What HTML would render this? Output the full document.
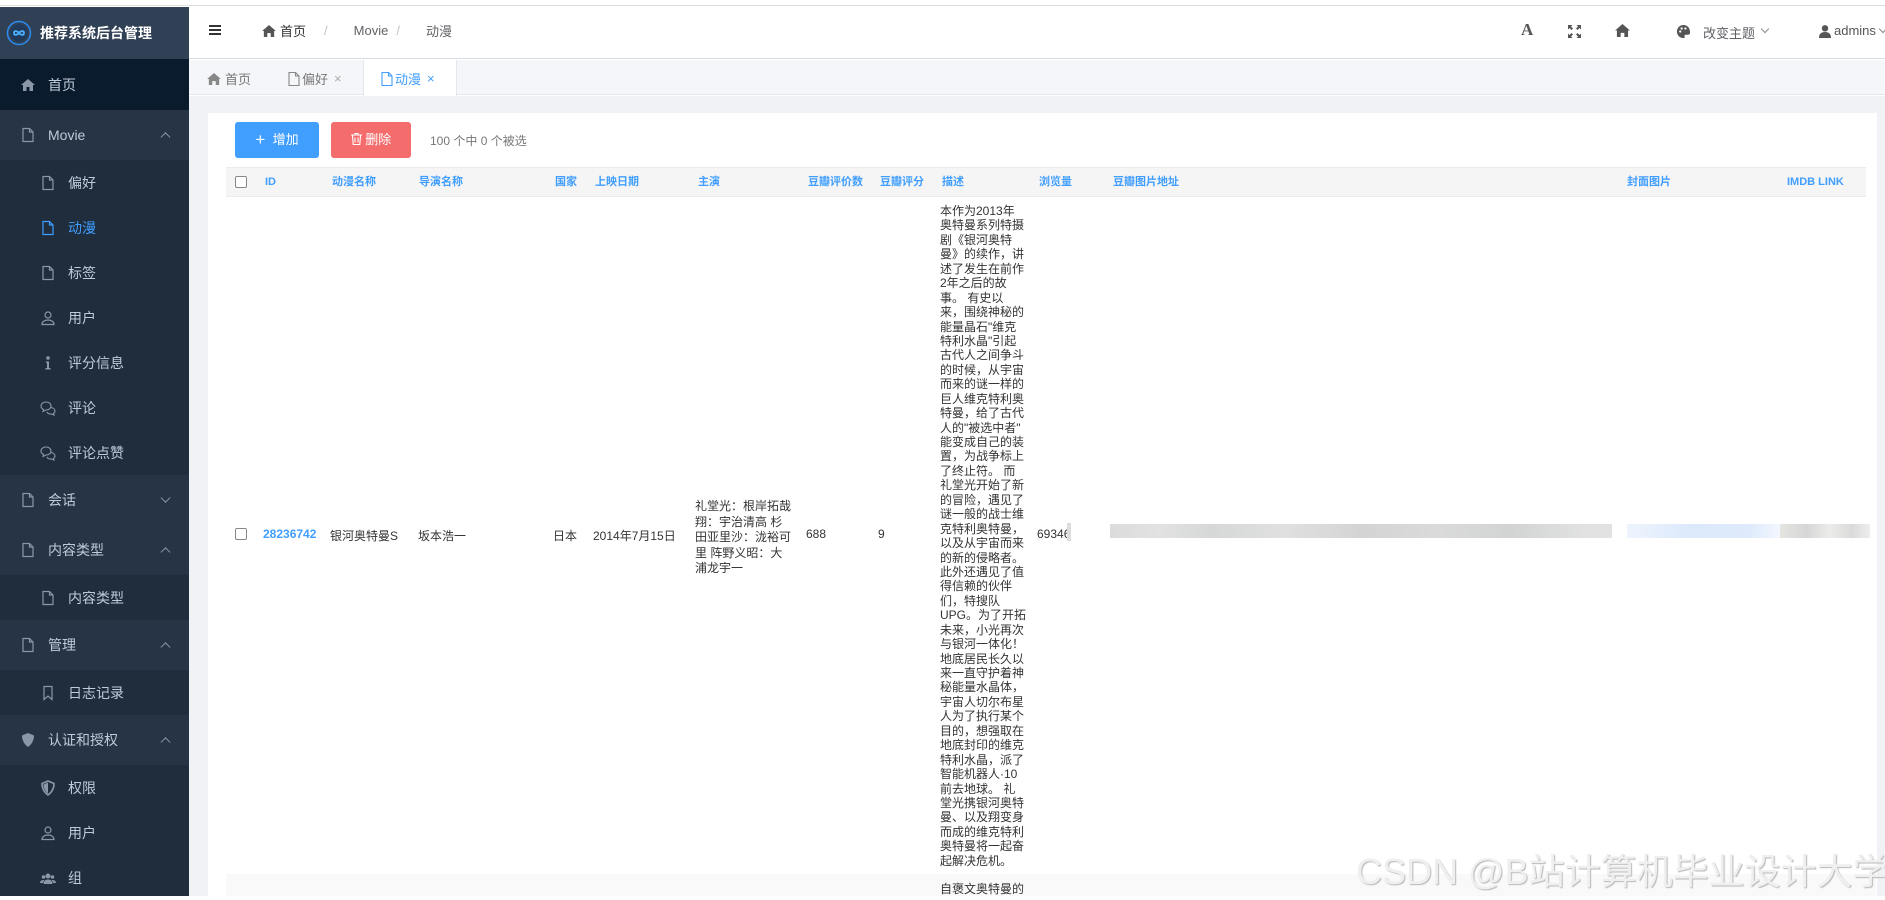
<!DOCTYPE html>
<html><head><meta charset="utf-8"><style>
*{margin:0;padding:0;box-sizing:border-box}
body{width:1885px;height:896px;overflow:hidden;font-family:"Liberation Sans","Noto Sans CJK SC",sans-serif;font-size:12px;color:#333;background:#fff;position:relative}
.a{position:absolute}
.side{left:0;top:7px;width:189px;height:889px;background:#1f2d3d}
.row{position:absolute;left:0;width:189px;color:#bfcbd9;font-size:14px;display:flex;align-items:center}
.row .ic{width:16px;height:16px;margin-right:12px;display:inline-block}
.sub{padding-left:40px;height:45px}
.top{padding-left:20px;height:50px;background:#263445}
.chev{position:absolute;right:20px;top:50%;width:7px;height:7px;border-left:1px solid #8a97a8;border-top:1px solid #8a97a8}
.up{transform:translateY(-20%) rotate(45deg)}
.dn{transform:translateY(-80%) rotate(225deg)}
.th{position:absolute;top:167px;height:30px;line-height:30px;color:#409eff;font-weight:bold;font-size:11px}
.td{position:absolute;font-size:12px;color:#333}
</style></head><body>
<div class="a" style="left:0;top:0;width:1885px;height:6px;background:#fff;border-bottom:1px solid #dcdcdc"></div>
<div class="a side"></div>
<div class="a" style="left:0;top:7px;width:189px;height:52px;background:#304156;display:flex;align-items:center">
 <svg style="margin-left:6px" width="26" height="26" viewBox="0 0 26 26"><circle cx="13" cy="13" r="11.5" fill="none" stroke="#2d8cf0" stroke-width="1.5"/><circle cx="13" cy="13" r="8.5" fill="#1f3a5a"/><path d="M13 13c-2-2.5-5-2.5-5 0s3 2.5 5 0 5-2.5 5 0-3 2.5-5 0" fill="none" stroke="#4fb0ff" stroke-width="1.8"/></svg>
 <span style="color:#fff;font-weight:bold;font-size:14px;margin-left:8px">推荐系统后台管理</span></div>
<div class="row top" style="top:59px;height:51px;background:#0b1b2e"><svg class="ic" viewBox="0 0 16 16"><path d="M1 8L8 2l7 6h-2v6H9.5v-4h-3v4H3V8z" fill="#8a97a8"/></svg>首页</div>
<div class="row top" style="top:110px"><svg class="ic" viewBox="0 0 16 16"><path d="M3 1.5h6.5L13 5v9.5H3z M9.5 1.5V5H13" fill="none" stroke="#8a97a8" stroke-width="1.2"/></svg>Movie<span class="chev up"></span></div>
<div class="row sub" style="top:160px"><svg class="ic" viewBox="0 0 16 16"><path d="M3 1.5h6.5L13 5v9.5H3z M9.5 1.5V5H13" fill="none" stroke="#8a97a8" stroke-width="1.2"/></svg>偏好</div>
<div class="row sub" style="top:205px;color:#409eff"><svg class="ic" viewBox="0 0 16 16"><path d="M3 1.5h6.5L13 5v9.5H3z M9.5 1.5V5H13" fill="none" stroke="#409eff" stroke-width="1.2"/></svg>动漫</div>
<div class="row sub" style="top:250px"><svg class="ic" viewBox="0 0 16 16"><path d="M3 1.5h6.5L13 5v9.5H3z M9.5 1.5V5H13" fill="none" stroke="#8a97a8" stroke-width="1.2"/></svg>标签</div>
<div class="row sub" style="top:295px"><svg class="ic" viewBox="0 0 16 16"><circle cx="8" cy="5" r="3" fill="none" stroke="#8a97a8" stroke-width="1.2"/><path d="M2 14.5c0-3 3-4.5 6-4.5s6 1.5 6 4.5z" fill="none" stroke="#8a97a8" stroke-width="1.2"/></svg>用户</div>
<div class="row sub" style="top:340px"><svg class="ic" viewBox="0 0 16 16"><circle cx="8" cy="3" r="1.8" fill="#8a97a8"/><path d="M6 6.5h3v6.5h1.5v1.5h-5V13H7V8H6z" fill="#8a97a8"/></svg>评分信息</div>
<div class="row sub" style="top:385px"><svg class="ic" viewBox="0 0 16 16"><path d="M1 6c0-2.5 2.5-4 5-4s5 1.5 5 4-2.5 4-5 4L3 11.5l.6-2C2 8.8 1 7.5 1 6zM11 7.5c2.5.3 4 1.8 4 3.5 0 1-.6 1.8-1.5 2.4l.5 1.6-2.5-1c-2 .3-4-.6-4.6-2" fill="none" stroke="#8a97a8" stroke-width="1.1"/></svg>评论</div>
<div class="row sub" style="top:430px"><svg class="ic" viewBox="0 0 16 16"><path d="M1 6c0-2.5 2.5-4 5-4s5 1.5 5 4-2.5 4-5 4L3 11.5l.6-2C2 8.8 1 7.5 1 6zM11 7.5c2.5.3 4 1.8 4 3.5 0 1-.6 1.8-1.5 2.4l.5 1.6-2.5-1c-2 .3-4-.6-4.6-2" fill="none" stroke="#8a97a8" stroke-width="1.1"/></svg>评论点赞</div>
<div class="row top" style="top:475px;background:#263445"><svg class="ic" viewBox="0 0 16 16"><path d="M3 1.5h6.5L13 5v9.5H3z M9.5 1.5V5H13" fill="none" stroke="#8a97a8" stroke-width="1.2"/></svg>会话<span class="chev dn"></span></div>
<div class="row top" style="top:525px"><svg class="ic" viewBox="0 0 16 16"><path d="M3 1.5h6.5L13 5v9.5H3z M9.5 1.5V5H13" fill="none" stroke="#8a97a8" stroke-width="1.2"/></svg>内容类型<span class="chev up"></span></div>
<div class="row sub" style="top:575px"><svg class="ic" viewBox="0 0 16 16"><path d="M3 1.5h6.5L13 5v9.5H3z M9.5 1.5V5H13" fill="none" stroke="#8a97a8" stroke-width="1.2"/></svg>内容类型</div>
<div class="row top" style="top:620px"><svg class="ic" viewBox="0 0 16 16"><path d="M3 1.5h6.5L13 5v9.5H3z M9.5 1.5V5H13" fill="none" stroke="#8a97a8" stroke-width="1.2"/></svg>管理<span class="chev up"></span></div>
<div class="row sub" style="top:670px"><svg class="ic" viewBox="0 0 16 16"><path d="M4 1.5h8v13l-4-3.5-4 3.5z" fill="none" stroke="#8a97a8" stroke-width="1.2"/></svg>日志记录</div>
<div class="row top" style="top:715px"><svg class="ic" viewBox="0 0 16 16"><path d="M8 1l6 2.5c0 5-2.5 9-6 11.5C4.5 12.5 2 8.5 2 3.5z" fill="#8a97a8"/></svg>认证和授权<span class="chev up"></span></div>
<div class="row sub" style="top:765px"><svg class="ic" viewBox="0 0 16 16"><path d="M8 1l6 2.5c0 5-2.5 9-6 11.5C4.5 12.5 2 8.5 2 3.5z" fill="none" stroke="#8a97a8" stroke-width="1.6"/><path d="M8 2.5v11c-2.5-2-4.5-5-4.5-9z" fill="#8a97a8"/></svg>权限</div>
<div class="row sub" style="top:810px"><svg class="ic" viewBox="0 0 16 16"><circle cx="8" cy="5" r="3" fill="none" stroke="#8a97a8" stroke-width="1.2"/><path d="M2 14.5c0-3 3-4.5 6-4.5s6 1.5 6 4.5z" fill="none" stroke="#8a97a8" stroke-width="1.2"/></svg>用户</div>
<div class="row sub" style="top:855px"><svg class="ic" viewBox="0 0 16 16"><circle cx="8" cy="6" r="2.5" fill="#8a97a8"/><circle cx="3.5" cy="7" r="1.8" fill="#8a97a8"/><circle cx="12.5" cy="7" r="1.8" fill="#8a97a8"/><path d="M3.5 14c0-3 2-4.5 4.5-4.5s4.5 1.5 4.5 4.5zM0 13c0-2 1.5-3 3.5-3 .5 0 1 .1 1 .2C3.5 11 3 12 3 13zM16 13c0-2-1.5-3-3.5-3-.5 0-1 .1-1 .2 1 .8 1.5 1.8 1.5 2.8z" fill="#8a97a8"/></svg>组</div>
<div class="a" style="left:189px;top:7px;width:1696px;height:52px;background:#fff;border-bottom:1px solid #d8dce5"></div>
<div class="a" style="left:209px;top:25px;width:12px;height:2px;background:#333;box-shadow:0 4px 0 #333,0 8px 0 #333"></div>
<div class="a" style="left:262px;top:21px;font-size:13px;color:#303133;display:flex;align-items:center"><svg width="14" height="12" viewBox="0 0 16 14"><path d="M0 7L8 0l8 7h-2v7H10V9.5H6V14H2V7z" fill="#555"/></svg><span style="margin-left:4px">首页</span><span style="margin:0 26px 0 18px;color:#c0c4cc">/</span><span style="color:#606266">Movie</span><span style="margin:0 26px 0 8px;color:#c0c4cc">/</span><span style="color:#606266">动漫</span></div>
<div class="a" style="left:1521px;top:20px;font-family:'Liberation Serif',serif;font-weight:bold;font-size:17px;color:#555">A</div>
<svg class="a" style="left:1568px;top:25px" width="13" height="13" viewBox="0 0 13 13"><path d="M0 0h4.5L3 1.5 5 3.5 3.5 5 1.5 3 0 4.5zM13 0v4.5L11.5 3 9.5 5 8 3.5 10 1.5 8.5 0zM0 13V8.5L1.5 10 3.5 8 5 9.5 3 11.5 4.5 13zM13 13H8.5L10 11.5 8 9.5 9.5 8 11.5 10 13 8.5z" fill="#555"/></svg>
<svg class="a" style="left:1615px;top:24px" width="15" height="13" viewBox="0 0 16 14"><path d="M0 7L8 0l8 7h-2v7H10V9.5H6V14H2V7z" fill="#555"/></svg>
<svg class="a" style="left:1676px;top:24px" width="15" height="15" viewBox="0 0 16 16"><path d="M8 1C4 1 1 4 1 8s3 7 7 7c1.2 0 1.6-.8 1.2-1.6-.5-1 .2-2 1.3-2H13c1.4 0 2-1 2-2.5C15 4 12 1 8 1z" fill="#555"/><circle cx="4.5" cy="8" r="1.2" fill="#fff"/><circle cx="6" cy="4.8" r="1.2" fill="#fff"/><circle cx="10" cy="4.8" r="1.2" fill="#fff"/></svg>
<div class="a" style="left:1703px;top:23px;font-size:13px;color:#606266">改变主题</div>
<div class="a" style="left:1762px;top:26px;width:6px;height:6px;border-right:1px solid #888;border-bottom:1px solid #888;transform:rotate(45deg)"></div>
<svg class="a" style="left:1819px;top:25px" width="12" height="13" viewBox="0 0 12 13"><circle cx="6" cy="3.3" r="3.2" fill="#555"/><path d="M0 13c0-4 2-6 6-6s6 2 6 6z" fill="#555"/></svg>
<div class="a" style="left:1834px;top:23px;font-size:13px;color:#555">admins</div>
<div class="a" style="left:1880px;top:26px;width:6px;height:6px;border-right:1px solid #888;border-bottom:1px solid #888;transform:rotate(45deg)"></div>
<div class="a" style="left:189px;top:60px;width:1696px;height:35px;background:#f5f6f9;border-bottom:1px solid #e4e7ed"></div>
<div class="a" style="left:207px;top:69px;font-size:13px;color:#777;display:flex;align-items:center"><svg width="14" height="12" viewBox="0 0 16 14"><path d="M0 7L8 0l8 7h-2v7H10V9.5H6V14H2V7z" fill="#888"/></svg><span style="margin-left:4px">首页</span></div>
<div class="a" style="left:288px;top:69px;font-size:13px;color:#777;display:flex;align-items:center"><svg width="12" height="14" viewBox="0 0 12 14"><path d="M1 .5h6.5L11 4v9.5H1z M7.5.5V4H11" fill="none" stroke="#888" stroke-width="1.1"/></svg><span style="margin-left:2px">偏好</span><span style="margin-left:6px;color:#aaa">×</span></div>
<div class="a" style="left:363px;top:60px;width:94px;height:36px;background:#fff;border-left:1px solid #e4e7ed;border-right:1px solid #e4e7ed"></div>
<div class="a" style="left:381px;top:69px;font-size:13px;color:#409eff;display:flex;align-items:center"><svg width="12" height="14" viewBox="0 0 12 14"><path d="M1 .5h6.5L11 4v9.5H1z M7.5.5V4H11" fill="none" stroke="#409eff" stroke-width="1.1"/></svg><span style="margin-left:2px">动漫</span><span style="margin-left:6px">×</span></div>
<div class="a" style="left:189px;top:96px;width:1696px;height:800px;background:#f0f2f5"></div>
<div class="a" style="left:208px;top:113px;width:1669px;height:783px;background:#fff"></div>
<div class="a" style="left:235px;top:122px;width:84px;height:36px;background:#409eff;border-radius:3px;color:#fff;font-size:13px;line-height:36px;text-align:center"><span style="font-size:17px;vertical-align:-1px">+</span>&nbsp;&nbsp;增加</div>
<div class="a" style="left:331px;top:122px;width:80px;height:36px;background:#f56c6c;border-radius:3px;color:#fff;font-size:13px;line-height:36px;text-align:center"><svg width="11" height="12" viewBox="0 0 11 12" style="vertical-align:-1px"><path d="M0 2h11M4 2V.5h3V2M1.5 2.5l.7 9h6.6l.7-9M4 4.5v5M7 4.5v5" fill="none" stroke="#fff" stroke-width="1.1"/></svg> 删除</div>
<div class="a" style="left:430px;top:132px;font-size:12px;color:#777">100 个中 0 个被选</div>
<div class="a" style="left:226px;top:167px;width:1640px;height:30px;background:#f5f5f5;border-top:1px solid #ebebeb;border-bottom:1px solid #ebebeb"></div>
<div class="a" style="left:235px;top:176px;width:12px;height:12px;border:1px solid #888;border-radius:2px;background:#fff"></div>
<div class="th" style="left:265px">ID</div>
<div class="th" style="left:332px">动漫名称</div>
<div class="th" style="left:419px">导演名称</div>
<div class="th" style="left:555px">国家</div>
<div class="th" style="left:595px">上映日期</div>
<div class="th" style="left:698px">主演</div>
<div class="th" style="left:808px">豆瓣评价数</div>
<div class="th" style="left:880px">豆瓣评分</div>
<div class="th" style="left:942px">描述</div>
<div class="th" style="left:1039px">浏览量</div>
<div class="th" style="left:1113px">豆瓣图片地址</div>
<div class="th" style="left:1627px">封面图片</div>
<div class="th" style="left:1787px">IMDB LINK</div>
<div class="a" style="left:235px;top:528px;width:12px;height:12px;border:1px solid #888;border-radius:2px;background:#fff"></div>
<div class="td" style="left:263px;top:527px;color:#409eff;font-weight:bold">28236742</div>
<div class="td" style="left:330px;top:527px">银河奥特曼S</div>
<div class="td" style="left:418px;top:527px">坂本浩一</div>
<div class="td" style="left:553px;top:527px">日本</div>
<div class="td" style="left:593px;top:527px">2014年7月15日</div>
<div class="td" style="left:695px;top:499px;line-height:15.5px">礼堂光：根岸拓哉<br>翔：宇治清高 杉<br>田亚里沙：泷裕可<br>里 阵野义昭：大<br>浦龙宇一</div>
<div class="td" style="left:806px;top:527px">688</div>
<div class="td" style="left:878px;top:527px">9</div>
<div class="td" style="left:940px;top:204px;line-height:14.43px;font-size:12px;white-space:nowrap">本作为2013年<br>奥特曼系列特摄<br>剧《银河奥特<br>曼》的续作，讲<br>述了发生在前作<br>2年之后的故<br>事。 有史以<br>来，围绕神秘的<br>能量晶石"维克<br>特利水晶"引起<br>古代人之间争斗<br>的时候，从宇宙<br>而来的谜一样的<br>巨人维克特利奥<br>特曼，给了古代<br>人的"被选中者"<br>能变成自己的装<br>置，为战争标上<br>了终止符。 而<br>礼堂光开始了新<br>的冒险，遇见了<br>谜一般的战士维<br>克特利奥特曼，<br>以及从宇宙而来<br>的新的侵略者。<br>此外还遇见了值<br>得信赖的伙伴<br>们，特搜队<br>UPG。为了开拓<br>未来，小光再次<br>与银河一体化！<br>地底居民长久以<br>来一直守护着神<br>秘能量水晶体，<br>宇宙人切尔布星<br>人为了执行某个<br>目的，想强取在<br>地底封印的维克<br>特利水晶，派了<br>智能机器人·10<br>前去地球。 礼<br>堂光携银河奥特<br>曼、以及翔变身<br>而成的维克特利<br>奥特曼将一起奋<br>起解决危机。</div>
<div class="td" style="left:1037px;top:527px">69346</div>
<div class="a" style="left:1067px;top:523px;width:4px;height:18px;background:#ddd"></div>
<div class="a" style="left:1110px;top:524px;width:502px;height:14px;background:linear-gradient(90deg,#dcdcdc,#e2e2e2 10%,#d6d8d8 20%,#e0e0e0 35%,#d4d4d4 50%,#dadada 65%,#d2d4d4 80%,#e2e2e2 95%)"></div>
<div class="a" style="left:1627px;top:524px;width:153px;height:14px;background:linear-gradient(90deg,#eef4fd,#dce9fb 40%,#deeafc 80%,#f3f7fe)"></div>
<div class="a" style="left:1780px;top:524px;width:90px;height:14px;background:linear-gradient(90deg,#e4e4e0,#d6d6d6 30%,#ececea 55%,#dadada 80%,#eee)"></div>
<div class="a" style="left:226px;top:874px;width:1650px;height:22px;background:#f9f9f9"></div>
<div class="td" style="left:940px;top:880px">自褒文奥特曼的</div>
<div class="a" style="left:1356px;top:843px;font-size:36px;color:#efefef;text-shadow:1px 1px 1px #b8b8b8;white-space:nowrap">CSDN @B站计算机毕业设计大学</div>
</body></html>
